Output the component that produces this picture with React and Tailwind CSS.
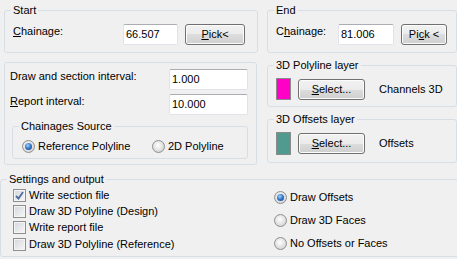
import React from "react";

function U({ children }) {
  return <span className="underline underline-offset-[1px] decoration-[1px]">{children}</span>;
}

function Group({ title, className = "", bodyClass = "", children }) {
  return (
    <fieldset className={`border border-[#d5dfe5] rounded-[3px] ${className}`}>
      {title && <legend className="ml-[6px] px-[2px] leading-[13px]">{title}</legend>}
      <div className={bodyClass}>{children}</div>
    </fieldset>
  );
}

function TextBox({ value, className = "" }) {
  return (
    <div
      className={`h-[21px] bg-white border border-[#e2e3ea] border-t-[#abadb3] rounded-[2px] pl-[2px] flex items-center leading-[13px] ${className}`}
    >
      {value}
    </div>
  );
}

function Btn({ children, className = "" }) {
  return (
    <div
      className={`h-[21px] border border-[#707070] rounded-[3px] bg-[linear-gradient(#f2f2f2,#ebebeb_50%,#dddddd_50%,#cfcfcf)] shadow-[inset_0_0_0_1px_#fcfcfc] flex items-center justify-center leading-[13px] ${className}`}
    >
      {children}
    </div>
  );
}

function Radio({ checked, label, className = "" }) {
  return (
    <div className={`flex items-center gap-[3px] h-[16px] ${className}`}>
      <span className="w-[13px] h-[13px] rounded-full border border-[#8e8f8f] bg-[radial-gradient(circle_at_45%_40%,#ffffff,#e6e6e6_45%,#c9c9c9)] flex items-center justify-center shrink-0">
        {checked && (
          <span className="w-[7px] h-[7px] rounded-full bg-[radial-gradient(circle_at_40%_35%,#9dd0fb,#2b6cc0_55%,#12407f)]" />
        )}
      </span>
      <span className="leading-[13px]">{label}</span>
    </div>
  );
}

function Check({ checked, label }) {
  return (
    <div className="flex items-center gap-[3px] h-[16.4px]">
      <span className="w-[13px] h-[13px] border border-[#8e8f8f] bg-[#f4f4f4] p-[1px] shrink-0">
        <span className="block w-full h-full bg-[linear-gradient(135deg,#d6d9de,#f5f5f5)] relative">
          {checked && (
            <svg width="9" height="9" viewBox="0 0 9 9" className="absolute left-0 top-0">
              <path d="M1 5 L3.5 7.5 L8 1" fill="none" stroke="#4d6b9e" strokeWidth="1.8" />
            </svg>
          )}
        </span>
      </span>
      <span className="leading-[13px]">{label}</span>
    </div>
  );
}

export default function App() {
  return (
    <div
      className="w-[457px] h-[259px] overflow-hidden bg-[#f0f0f0] text-[11px] text-black pt-[4px]"
      style={{ fontFamily: '"Liberation Sans", Arial, sans-serif' }}
    >
      <div className="flex gap-[9px] pl-[4px]">
        {/* left column */}
        <div className="w-[254px] flex flex-col gap-[9px]">
          <Group title="Start" bodyClass="pl-[8px] pt-[7px] pb-[7px]">
            <div className="flex items-start">
              <span className="w-[110px] leading-[13px] mt-[1px]">
                <U>C</U>hainage:
              </span>
              <TextBox value="66.507" className="w-[55px]" />
              <Btn className="w-[60px] ml-[7px]">
                <U>P</U>ick&lt;
              </Btn>
            </div>
          </Group>

          <div className="border border-[#d5dfe5] rounded-[3px] pl-[5px] pr-[8px] pt-[6px] pb-[5px] w-[253px]">
            <div className="flex items-start justify-between">
              <span className="leading-[13px] mt-[1px]">Draw and section interval:</span>
              <TextBox value="1.000" className="w-[79px]" />
            </div>
            <div className="flex items-start justify-between mt-[4px]">
              <span className="leading-[13px] mt-[1px]">
                <U>R</U>eport interval:
              </span>
              <TextBox value="10.000" className="w-[79px]" />
            </div>
            <Group title="Chainages Source" className="ml-[2px] mt-[5px]" bodyClass="pl-[9px] pt-[5px] pb-[4px]">
              <div className="flex items-center">
                <Radio checked label="Reference Polyline" className="w-[130px]" />
                <Radio label="2D Polyline" />
              </div>
            </Group>
          </div>
        </div>

        {/* right column */}
        <div className="w-[190px] flex flex-col">
          <Group title="End" bodyClass="pl-[8px] pt-[7px] pb-[7px]">
            <div className="flex items-start">
              <span className="w-[62px] leading-[13px] mt-[1px]">
                C<U>h</U>ainage:
              </span>
              <TextBox value="81.006" className="w-[56px]" />
              <Btn className="w-[46px] ml-[7px]">
                Pi<U>c</U>k &lt;
              </Btn>
            </div>
          </Group>

          <Group title="3D Polyline layer" className="mt-[6px]" bodyClass="pl-[8px] pt-[6px] pb-[6px]">
            <div className="flex items-center">
              <span className="w-[15px] h-[22px] bg-[#ff00c6] border border-[#8a8a8a]" />
              <Btn className="w-[67px] ml-[7px]">
                <U>S</U>elect...
              </Btn>
              <span className="ml-[14px] leading-[13px]">Channels 3D</span>
            </div>
          </Group>

          <Group title="3D Offsets layer" className="mt-[6px]" bodyClass="pl-[8px] pt-[6px] pb-[7px]">
            <div className="flex items-center">
              <span className="w-[15px] h-[23px] bg-[#509a8f] border border-[#8a8a8a]" />
              <Btn className="w-[67px] ml-[7px]">
                <U>S</U>elect...
              </Btn>
              <span className="ml-[14px] leading-[13px]">Offsets</span>
            </div>
          </Group>
        </div>
      </div>

      <Group title="Settings and output" className="mt-[8px] w-[462px]" bodyClass="pl-[12px] pt-[1px] pb-[3px]">
        <div className="flex">
          <div className="w-[261px] flex flex-col">
            <Check checked label="Write section file" />
            <Check label="Draw 3D Polyline (Design)" />
            <Check label="Write report file" />
            <Check label="Draw 3D Polyline (Reference)" />
          </div>
          <div className="flex flex-col gap-[7px] pt-[2px]">
            <Radio checked label="Draw Offsets" />
            <Radio label="Draw 3D Faces" />
            <Radio label="No Offsets or Faces" />
          </div>
        </div>
      </Group>
    </div>
  );
}
